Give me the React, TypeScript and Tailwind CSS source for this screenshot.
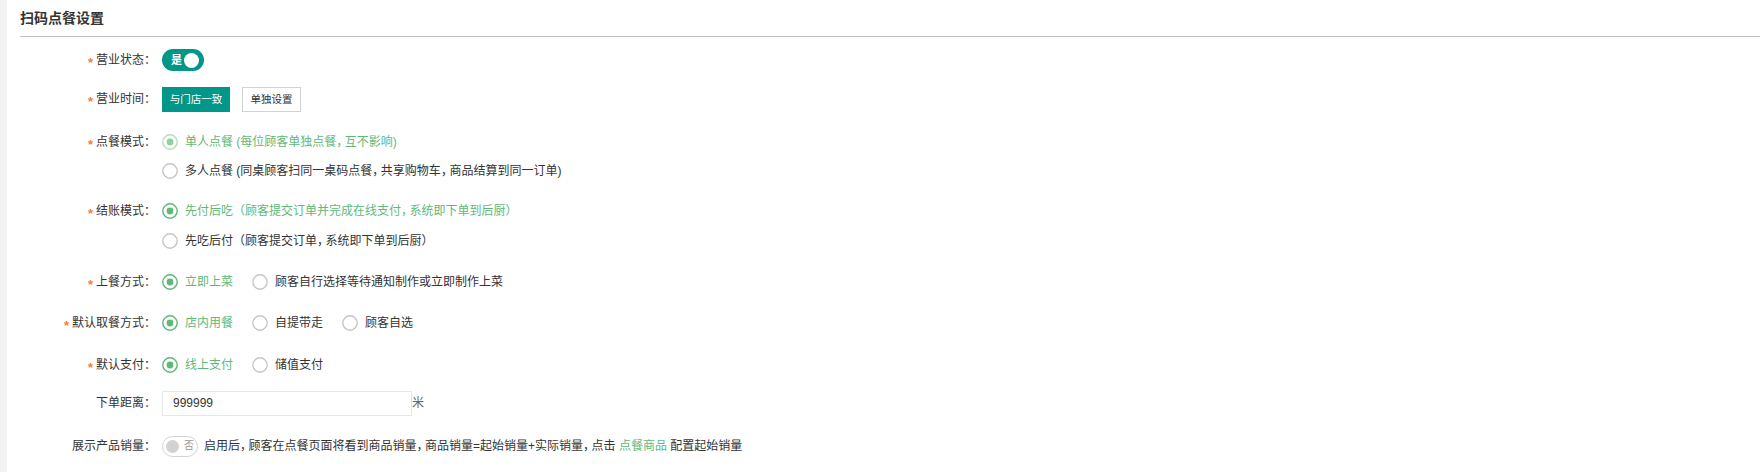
import React from 'react';

const GREEN = '#5FB878';

// the commas in the reference font are narrower than a full em
function txt(s: string) {
  const parts = s.split('，');
  return parts.map((p, i) => (
    <React.Fragment key={i}>
      {p}
      {i < parts.length - 1 && <span className="tracking-[-3.5px]">，</span>}
    </React.Fragment>
  ));
}

function Star() {
  return <span className="inline-block translate-y-[3px] mr-[3px] text-[13px] font-bold text-[#fb7a32]">*</span>;
}

function Label({ text, required = true }: { text: string; required?: boolean }) {
  return (
    <div className="w-[136px] h-[30px] flex items-center justify-end shrink-0 text-[12px] text-[#333]">
      {required && <Star />}
      <span>{text}：</span>
    </div>
  );
}

function Radio({ checked = false, pale = false, children }: { checked?: boolean; pale?: boolean; children: React.ReactNode }) {
  const ring = checked ? (pale ? '#b3dfba' : GREEN) : '#c6c6c6';
  const dot = pale ? '#8fd09b' : GREEN;
  return (
    <label className="flex items-center gap-[7px] cursor-pointer">
      <svg width="16" height="16" viewBox="0 0 16 16">
        <circle cx="8" cy="8" r="7.2" fill="white" stroke={ring} strokeWidth="1.4" />
        {checked && <circle cx="8" cy="8" r="3.4" fill={dot} />}
      </svg>
      <span className={checked ? 'text-[#5FB878]' : 'text-[#333]'}>{children}</span>
    </label>
  );
}

export default function App() {
  return (
    <div className="min-h-screen flex bg-white font-['Liberation_Sans','Noto_Sans_CJK_SC',sans-serif] text-[12px] leading-[16px]">
      <div className="w-[7px] shrink-0 bg-[#f2f2f2]" />
      <div className="flex-1 pl-[13px]">
        {/* header */}
        <div className="h-[37px] flex items-center border-b border-[#c2c2c2] text-[14px] font-bold text-[#333]">
          扫码点餐设置
        </div>

        {/* 营业状态 */}
        <div className="flex mt-[8px]">
          <Label text="营业状态" />
          <div className="ml-[6px] h-[30px] flex items-center">
            <div className="w-[42px] h-[22px] rounded-full bg-[#009688] flex items-center justify-between pl-[9px] pr-[5px]">
              <span className="text-[11px] font-bold text-white">是</span>
              <span className="w-[15px] h-[15px] rounded-full bg-white" />
            </div>
          </div>
        </div>

        {/* 营业时间 */}
        <div className="flex mt-[9px]">
          <Label text="营业时间" />
          <div className="ml-[6px] h-[30px] flex items-center gap-[12px]">
            <button className="h-[25px] w-[68px] bg-[#009688] text-white text-[10.5px] flex items-center justify-center">
              与门店一致
            </button>
            <button className="h-[25px] w-[59px] border border-[#d2d2d2] bg-white text-[#333] text-[10.5px] flex items-center justify-center">
              单独设置
            </button>
          </div>
        </div>

        {/* 点餐模式 */}
        <div className="flex mt-[13px]">
          <Label text="点餐模式" />
          <div className="ml-[6px] flex flex-col">
            <div className="h-[30px] flex items-center">
              <Radio checked pale>{txt('单人点餐 (每位顾客单独点餐，互不影响)')}</Radio>
            </div>
            <div className="h-[28px] flex items-center">
              <Radio>{txt('多人点餐 (同桌顾客扫同一桌码点餐，共享购物车，商品结算到同一订单)')}</Radio>
            </div>
          </div>
        </div>

        {/* 结账模式 */}
        <div className="flex mt-[11px]">
          <Label text="结账模式" />
          <div className="ml-[6px] flex flex-col">
            <div className="h-[30px] flex items-center">
              <Radio checked>{txt('先付后吃（顾客提交订单并完成在线支付，系统即下单到后厨）')}</Radio>
            </div>
            <div className="h-[30px] flex items-center">
              <Radio>{txt('先吃后付（顾客提交订单，系统即下单到后厨）')}</Radio>
            </div>
          </div>
        </div>

        {/* 上餐方式 */}
        <div className="flex mt-[11px]">
          <Label text="上餐方式" />
          <div className="ml-[6px] h-[30px] flex items-center gap-[19px]">
            <Radio checked>立即上菜</Radio>
            <Radio>顾客自行选择等待通知制作或立即制作上菜</Radio>
          </div>
        </div>

        {/* 默认取餐方式 */}
        <div className="flex mt-[11px]">
          <Label text="默认取餐方式" />
          <div className="ml-[6px] h-[30px] flex items-center gap-[19px]">
            <Radio checked>店内用餐</Radio>
            <Radio>自提带走</Radio>
            <Radio>顾客自选</Radio>
          </div>
        </div>

        {/* 默认支付 */}
        <div className="flex mt-[12px]">
          <Label text="默认支付" />
          <div className="ml-[6px] h-[30px] flex items-center gap-[19px]">
            <Radio checked>线上支付</Radio>
            <Radio>储值支付</Radio>
          </div>
        </div>

        {/* 下单距离 */}
        <div className="flex mt-[8px]">
          <Label text="下单距离" required={false} />
          <div className="ml-[6px] h-[30px] flex items-center">
            <input
              readOnly
              value="999999"
              className="w-[250px] h-[25px] border border-[#e6e6e6] pl-[10px] text-[12px] text-[#333] outline-none"
            />
            <span className="text-[#666]">米</span>
          </div>
        </div>

        {/* 展示产品销量 */}
        <div className="flex mt-[13px]">
          <Label text="展示产品销量" required={false} />
          <div className="ml-[6px] h-[30px] flex items-center">
            <div className="w-[36px] h-[21px] rounded-full border border-[#d2d2d2] flex items-center pl-[3px] gap-[5px]">
              <span className="w-[13px] h-[13px] rounded-full bg-[#d2d2d2]" />
              <span className="text-[10px] text-[#999]">否</span>
            </div>
            <span className="ml-[6px] text-[#333]">
              {txt('启用后，顾客在点餐页面将看到商品销量，商品销量=起始销量+实际销量，点击 ')}
              <span className="text-[#5FB878]">点餐商品</span> 配置起始销量
            </span>
          </div>
        </div>
      </div>
    </div>
  );
}
